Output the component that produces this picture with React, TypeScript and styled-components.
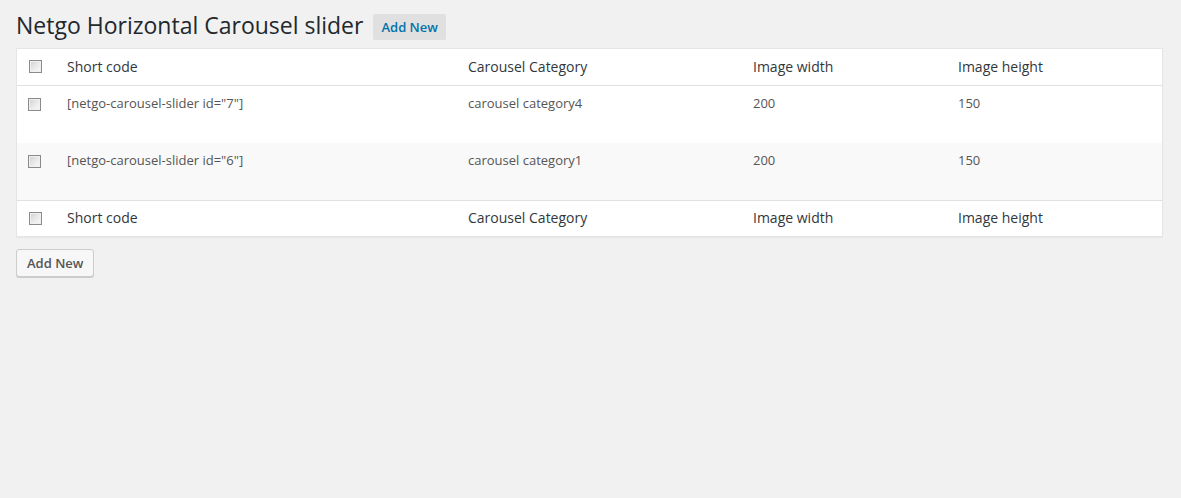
import React from "react";
import styled, { createGlobalStyle } from "styled-components";

const GlobalStyle = createGlobalStyle`
  html, body {
    margin: 0;
    padding: 0;
    background: #f1f1f1;
    font-family: "Open Sans", "Liberation Sans", sans-serif;
    color: #444;
  }
  #root { min-height: 498px; }
`;

const Wrap = styled.div`
  padding: 0 18px 0 16px;
`;

const TitleRow = styled.div`
  display: flex;
  align-items: flex-start;
  gap: 10px;
`;

const Title = styled.h1`
  margin: 0;
  padding: 11px 0 8px 0;
  font-size: 23px;
  font-weight: 400;
  line-height: 29px;
  color: #23282d;
`;

const TitleAction = styled.a`
  margin-top: 14px;
  padding: 4px 8px;
  border-radius: 2px;
  background: #e0e0e0;
  color: #0073aa;
  font-size: 13px;
  font-weight: 600;
  line-height: 18px;
  text-decoration: none;
  cursor: pointer;
`;

const Table = styled.div`
  background: #fff;
  border: 1px solid #e5e5e5;
  box-shadow: 0 1px 1px rgba(0, 0, 0, 0.04);
`;

const COLS = "40px 401px 285px 205px 1fr";

const HeadRow = styled.div<{ $footer?: boolean }>`
  display: grid;
  grid-template-columns: ${COLS};
  height: ${(p) => (p.$footer ? "35px" : "36px")};
  border-bottom: ${(p) => (p.$footer ? "none" : "1px solid #e1e1e1")};
  border-top: ${(p) => (p.$footer ? "1px solid #e1e1e1" : "none")};
`;

const BodyRow = styled.div<{ $alt?: boolean }>`
  display: grid;
  grid-template-columns: ${COLS};
  height: 57px;
  background: ${(p) => (p.$alt ? "#f9f9f9" : "#fff")};
`;

const HeadCell = styled.div<{ $footer?: boolean }>`
  padding: ${(p) => (p.$footer ? "7px 10px" : "8px 10px")};
  font-size: 14px;
  line-height: 20px;
  color: #32373c;
  white-space: nowrap;
`;

const Cell = styled.div`
  padding: 8px 10px;
  font-size: 13px;
  line-height: 19.5px;
  color: #555;
  white-space: nowrap;
`;

const CheckCell = styled.div<{ $head?: boolean }>`
  padding: ${(p) => (p.$head ? "11px 0 0 12px" : "12px 0 0 11px")};
`;

const Check = styled.input.attrs({ type: "checkbox" })`
  appearance: none;
  -webkit-appearance: none;
  display: block;
  margin: 0;
  width: 13px;
  height: 13px;
  box-sizing: border-box;
  border: 1px solid #8a8a8a;
  background: linear-gradient(135deg, #cfcfcf 0%, #e6e6e6 45%, #fbfbfb 100%);
  box-shadow: inset 0 0 0 1px #f0f0f0;
  cursor: pointer;
`;

const Footer = styled.div`
  padding-top: 12px;
`;

const Button = styled.button`
  height: 28px;
  padding: 0 10px 1px;
  border: 1px solid #ccc;
  border-radius: 3px;
  background: #f7f7f7;
  box-shadow: 0 1px 0 #ccc;
  color: #555;
  font-family: "Open Sans", "Liberation Sans", sans-serif;
  font-size: 13px;
  font-weight: 600;
  line-height: 26px;
  cursor: pointer;
`;

const headers = ["Short code", "Carousel Category", "Image width", "Image height"];

const rows = [
  { code: '[netgo-carousel-slider id="7"]', cat: "carousel category4", w: "200", h: "150" },
  { code: '[netgo-carousel-slider id="6"]', cat: "carousel category1", w: "200", h: "150" },
];

function Header({ footer }: { footer?: boolean }) {
  return (
    <HeadRow $footer={footer}>
      <CheckCell $head>
        <Check />
      </CheckCell>
      {headers.map((h) => (
        <HeadCell key={h} $footer={footer}>
          {h}
        </HeadCell>
      ))}
    </HeadRow>
  );
}

export default function App() {
  return (
    <>
      <GlobalStyle />
      <Wrap>
        <TitleRow>
          <Title>Netgo Horizontal Carousel slider</Title>
          <TitleAction>Add New</TitleAction>
        </TitleRow>
        <Table>
          <Header />
          {rows.map((r, i) => (
            <BodyRow key={r.code} $alt={i % 2 === 1}>
              <CheckCell>
                <Check />
              </CheckCell>
              <Cell>{r.code}</Cell>
              <Cell>{r.cat}</Cell>
              <Cell>{r.w}</Cell>
              <Cell>{r.h}</Cell>
            </BodyRow>
          ))}
          <Header footer />
        </Table>
        <Footer>
          <Button>Add New</Button>
        </Footer>
      </Wrap>
    </>
  );
}
